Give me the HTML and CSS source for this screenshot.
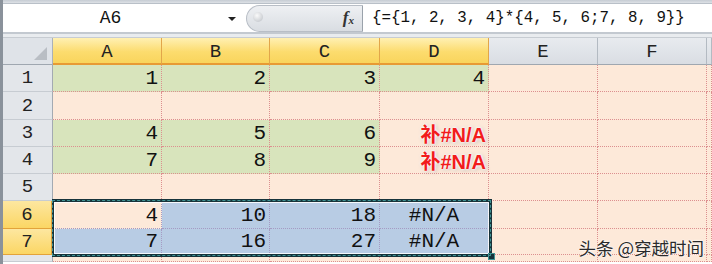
FILE: index.html
```html
<!DOCTYPE html>
<html lang="zh-CN">

<head>
  <meta charset="UTF-8" />
  <title>数组公式</title>
  <link rel="stylesheet" href="styles.css">
</head>

<body>
  <div class="app">
    <div class="topbar"></div>

    <!-- 编辑栏 -->
    <div class="formula-bar">
      <div class="name-box">
        <span class="name">A6</span>
        <i class="arrow"></i>
      </div>
      <div class="fx-pill">
        <span class="knob"></span>
        <span class="fx">f<sub>x</sub></span>
      </div>
      <div class="formula">{={1, 2, 3, 4}*{4, 5, 6;7, 8, 9}}</div>
    </div>
    <div class="gap"></div>

    <!-- 表格 -->
    <div class="sheet">
      <div class="corner"><i></i></div>
      <div class="col-head on">A</div>
      <div class="col-head on">B</div>
      <div class="col-head on">C</div>
      <div class="col-head on">D</div>
      <div class="col-head">E</div>
      <div class="col-head">F</div>
      <div class="col-head"></div>

      <div class="row-head">1</div>
      <div class="cell green">1</div>
      <div class="cell green">2</div>
      <div class="cell green">3</div>
      <div class="cell green">4</div>
      <div class="cell"></div>
      <div class="cell"></div>
      <div class="cell"></div>

      <div class="row-head">2</div>
      <div class="cell"></div>
      <div class="cell"></div>
      <div class="cell"></div>
      <div class="cell"></div>
      <div class="cell"></div>
      <div class="cell"></div>
      <div class="cell"></div>

      <div class="row-head">3</div>
      <div class="cell green">4</div>
      <div class="cell green">5</div>
      <div class="cell green">6</div>
      <div class="cell note">补#N/A</div>
      <div class="cell"></div>
      <div class="cell"></div>
      <div class="cell"></div>

      <div class="row-head">4</div>
      <div class="cell green">7</div>
      <div class="cell green">8</div>
      <div class="cell green">9</div>
      <div class="cell note">补#N/A</div>
      <div class="cell"></div>
      <div class="cell"></div>
      <div class="cell"></div>

      <div class="row-head">5</div>
      <div class="cell"></div>
      <div class="cell"></div>
      <div class="cell"></div>
      <div class="cell"></div>
      <div class="cell"></div>
      <div class="cell"></div>
      <div class="cell"></div>

      <div class="row-head on">6</div>
      <div class="cell sel">4</div>
      <div class="cell sel blue">10</div>
      <div class="cell sel blue">18</div>
      <div class="cell sel blue err">#N/A</div>
      <div class="cell"></div>
      <div class="cell"></div>
      <div class="cell"></div>

      <div class="row-head on">7</div>
      <div class="cell sel blue">7</div>
      <div class="cell sel blue">16</div>
      <div class="cell sel blue">27</div>
      <div class="cell sel blue err">#N/A</div>
      <div class="cell"></div>
      <div class="cell"></div>
      <div class="cell"></div>

      <div class="row-head"></div>
      <div class="cell"></div>
      <div class="cell"></div>
      <div class="cell"></div>
      <div class="cell"></div>
      <div class="cell"></div>
      <div class="cell"></div>
      <div class="cell"></div>

      <!-- 选区框 -->
      <div class="selection"><i class="handle"></i></div>
    </div>

    <div class="watermark">头条 @穿越时间</div>
  </div>
</body>

</html>
```

FILE: styles.css
```css
* {
  margin: 0;
  padding: 0;
  box-sizing: border-box;
}

body {
  width: 712px;
  height: 264px;
  overflow: hidden;
  background: #fff;
}

.app {
  position: relative;
  border-left: 3px solid #8a929b;
  height: 264px;
  overflow: hidden;
  font-family: "Liberation Mono", "Noto Sans CJK SC", monospace;
  color: #111;
}

.topbar {
  height: 4px;
  background: linear-gradient(#c6ccd3, #dde1e6);
  border-bottom: 1px solid #b9c0c8;
}

/* 编辑栏 */
.formula-bar {
  height: 30px;
  display: flex;
  align-items: center;
  background: #fff;
  border-bottom: 2px solid #c3c9d0;
}

.name-box {
  width: 243px;
  height: 100%;
  display: flex;
  align-items: center;
}

.name-box .name {
  flex: 1;
  text-align: center;
  font-size: 18px;
  padding-right: 10px;
}

.name-box .arrow {
  width: 0;
  height: 0;
  border-left: 4px solid transparent;
  border-right: 4px solid transparent;
  border-top: 4px solid #222;
  margin-right: 10px;
  margin-top: 1px;
}

.fx-pill {
  width: 117px;
  height: 27px;
  display: flex;
  align-items: center;
  justify-content: space-between;
  background: linear-gradient(#eef0f3, #d9dde2);
  border: 1px solid #b8bec6;
  border-right: 1px solid #9aa2ab;
  border-radius: 14px 0 0 14px;
  padding: 0 8px 0 6px;
}

.fx-pill .knob {
  width: 10px;
  height: 10px;
  border-radius: 50%;
  background: radial-gradient(circle at 40% 35%, #fafafa, #b9bec4);
  margin-bottom: 3px;
}

.fx-pill .fx {
  font: italic bold 17px "Liberation Serif", serif;
  color: #333;
}

.fx-pill .fx sub {
  font-size: 11px;
  vertical-align: -1px;
}

.formula {
  flex: 1;
  padding-left: 9px;
  font-size: 15.8px;
  white-space: nowrap;
}

.gap {
  height: 4px;
  background: #e9ecef;
  border-bottom: 1px solid #c7ccd2;
}

/* 表格 */
.sheet {
  position: relative;
  display: grid;
  grid-template-columns: 50px 109px 108px 110px 109px 109px 109px 5px;
  grid-template-rows: 27px 27px 28px 27px 27px 27px 28px 26px 7px;
  font-size: 21px;
}

.corner {
  background: #dfe3e8;
  border-right: 1px solid #aab1b9;
  border-bottom: 1px solid #9fa7b0;
  position: relative;
}

.corner i {
  position: absolute;
  right: 5px;
  bottom: 4px;
  width: 0;
  height: 0;
  border-left: 13px solid transparent;
  border-bottom: 13px solid #b9bec4;
}

.col-head {
  background: linear-gradient(#e8ebef, #d9dde3);
  border-right: 1px solid #b3bac2;
  border-bottom: 1px solid #9fa7b0;
  display: flex;
  align-items: center;
  justify-content: center;
  padding-top: 2px;
  font-size: 19px;
  color: #222;
}

.col-head.on {
  background: linear-gradient(#fff0b3, #fcdc6e 55%, #f9d45c);
  border-right-color: #e2a64a;
  border-bottom: 2px solid #e79a34;
}

.row-head {
  background: #e3e6ea;
  border-right: 1px solid #a3aab2;
  border-bottom: 1px solid #c7ccd2;
  display: flex;
  align-items: center;
  justify-content: center;
  font-size: 19px;
  color: #222;
}

.row-head.on {
  background: linear-gradient(#fde7a0, #fbd664);
  border-right: 2px solid #e3a33a;
  border-bottom-color: #e3a33a;
}

.cell {
  background: #fde9d9;
  border-right: 1px dotted #dc8f8f;
  border-bottom: 1px dotted #dc8f8f;
  display: flex;
  align-items: flex-end;
  justify-content: flex-end;
  padding: 0 3px 2px 0;
  line-height: 1;
  white-space: nowrap;
}

.cell.green {
  background: #d8e4bc;
}

.cell.blue {
  background: #b8cce4;
}

.cell.sel {
  border-right-color: #a59bc3;
  border-bottom-color: #a59bc3;
}

.cell.err {
  justify-content: center;
  padding-right: 0;
}

.cell.note {
  align-items: center;
  padding: 0 2px 0 0;
  font: bold 20px "Liberation Sans", "Noto Sans CJK SC", sans-serif;
  color: #f21c1c;
  text-shadow: 0 0 2px #fff, 0 0 3px #fff, 0 0 4px #fff, 1px 1px 4px rgba(0, 0, 0, 0.35);
  overflow: visible;
  z-index: 1;
}

.selection {
  position: absolute;
  left: 49px;
  top: 161px;
  width: 440px;
  height: 58px;
  border: 3px solid #17333a;
  border-left-width: 2px;
  box-shadow: inset 0 0 0 1px rgba(255, 255, 255, 0.85);
}

.selection::after {
  content: "";
  position: absolute;
  left: -2px;
  right: -2px;
  top: -2px;
  bottom: -2px;
  border: 1px dashed #3f9494;
}

.selection .handle {
  position: absolute;
  right: -6px;
  bottom: -6px;
  width: 7px;
  height: 7px;
  background: #17333a;
  border: 1px solid #3f9494;
}

.watermark {
  position: absolute;
  right: 8px;
  bottom: 4px;
  font: 17.5px "Noto Sans CJK SC", sans-serif;
  color: #2a2a2a;
  text-shadow: 0 0 2px #fff, 0 0 2px #fff;
}
```
